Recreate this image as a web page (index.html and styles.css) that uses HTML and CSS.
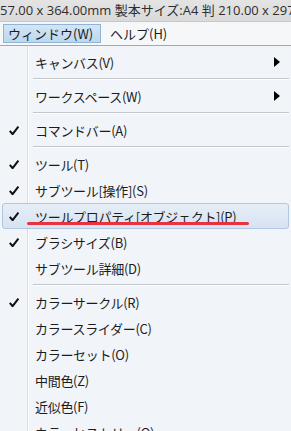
FILE: index.html
```html
<!DOCTYPE html>
<html lang="ja">
    <head>
        <meta charset="UTF-8">
        <title>ウィンドウ menu</title>
        <link rel="stylesheet" href="styles.css">
    </head>

    <body>

        <div class="title_bar"><span>57.00 x 364.00mm 製本サイズ:A4 判 210.00 x 297.00mm</span></div>

        <div class="menu_bar">
            <span class="bar_item active">ウィンドウ(W)</span>
            <span class="bar_item">ヘルプ(H)</span>
        </div>

        <div class="menu">

            <div class="item"><span class="check"></span><span class="label">キャンバス(V)</span><span class="arrow"></span></div>
            <div class="sep"></div>
            <div class="item"><span class="check"></span><span class="label">ワークスペース(W)</span><span class="arrow"></span></div>
            <div class="sep"></div>
            <div class="item"><span class="check on"></span><span class="label">コマンドバー(A)</span></div>
            <div class="sep"></div>
            <div class="item"><span class="check on"></span><span class="label">ツール(T)</span></div>
            <div class="item"><span class="check on"></span><span class="label">サブツール[操作](S)</span></div>
            <div class="item hover"><span class="check on"></span><span class="label">ツールプロパティ[オブジェクト](P)</span><span class="red_line"></span></div>
            <div class="item"><span class="check on"></span><span class="label">ブラシサイズ(B)</span></div>
            <div class="item"><span class="check"></span><span class="label">サブツール詳細(D)</span></div>
            <div class="sep"></div>
            <div class="item"><span class="check on"></span><span class="label">カラーサークル(R)</span></div>
            <div class="item"><span class="check"></span><span class="label">カラースライダー(C)</span></div>
            <div class="item"><span class="check"></span><span class="label">カラーセット(O)</span></div>
            <div class="item"><span class="check"></span><span class="label">中間色(Z)</span></div>
            <div class="item"><span class="check"></span><span class="label">近似色(F)</span></div>
            <div class="item"><span class="check"></span><span class="label">カラーヒストリー(Q)</span></div>

        </div>

    </body>
</html>
```

FILE: styles.css
```css
body {
    margin: 0;
    width: 291px;
    height: 431px;
    overflow: hidden;
    background-color: #f1f4f8;
    font-family: "Noto Sans CJK JP", "Noto Sans", sans-serif;
    color: #1c1c1c;
}

.title_bar {
    height: 21px;
    background: linear-gradient(#e4e4e4, #d9d9d9);
    border-bottom: 1px solid #c8c8c8;
    font-family: "Open Sans", "Noto Sans CJK JP", sans-serif;
    font-size: 13px;
    line-height: 21px;
    color: #2e2e2e;
    white-space: nowrap;
    overflow: hidden;
}

.menu_bar {
    height: 23px;
    display: flex;
    align-items: center;
    gap: 4px;
    padding-left: 3px;
    background-color: #f5f7f9;
    border-bottom: 1px solid #a3a8ae;
}

.bar_item {
    font-size: 13px;
    line-height: 17px;
    padding: 0 4px 0 4px;
    border: 1px solid transparent;
}

.bar_item.active {
    width: 88px;
    background: linear-gradient(#d3e6f5, #bcd7ee);
    border-color: #8fb4d6;
}

.menu {
    padding: 3px 2px 0 2px;
    background: linear-gradient(to right, transparent 27px, #dadee4 27px, #dadee4 28px, #ffffff 28px, #ffffff 29px, transparent 29px);
}

.item {
    position: relative;
    height: 26px;
    display: grid;
    grid-template-columns: 32px 1fr 18px;
    align-items: center;
    border: 1px solid transparent;
    box-sizing: border-box;
    font-size: 13px;
}

.item.hover {
    background: linear-gradient(#e6eef7, #d6e3f1);
    border-color: #afc7e1;
    border-radius: 3px;
}

.check.on {
    width: 10px;
    height: 9px;
    margin-left: 6px;
    background: url("data:image/svg+xml;utf8,<svg xmlns='http://www.w3.org/2000/svg' width='10' height='9' viewBox='0 0 10 9'><path d='M0.8 4.8 L3.6 8.2 L9.4 0.6' fill='none' stroke='%23111' stroke-width='2'/></svg>") no-repeat;
}

.label {
    white-space: nowrap;
    letter-spacing: -0.3px;
}

.arrow {
    width: 0;
    height: 0;
    border-top: 5px solid transparent;
    border-bottom: 5px solid transparent;
    border-left: 6px solid #000;
    margin-left: 4px;
}

.sep {
    height: 8px;
    margin-left: 31px;
    background: linear-gradient(transparent 3px, #c3c7cc 3px, #c3c7cc 4px, #ffffff 4px, #ffffff 5px, transparent 5px);
}

.red_line {
    position: absolute;
    left: 24px;
    top: 18px;
    width: 222px;
    height: 3px;
    border-radius: 2px;
    background-color: #e8323f;
}
```
